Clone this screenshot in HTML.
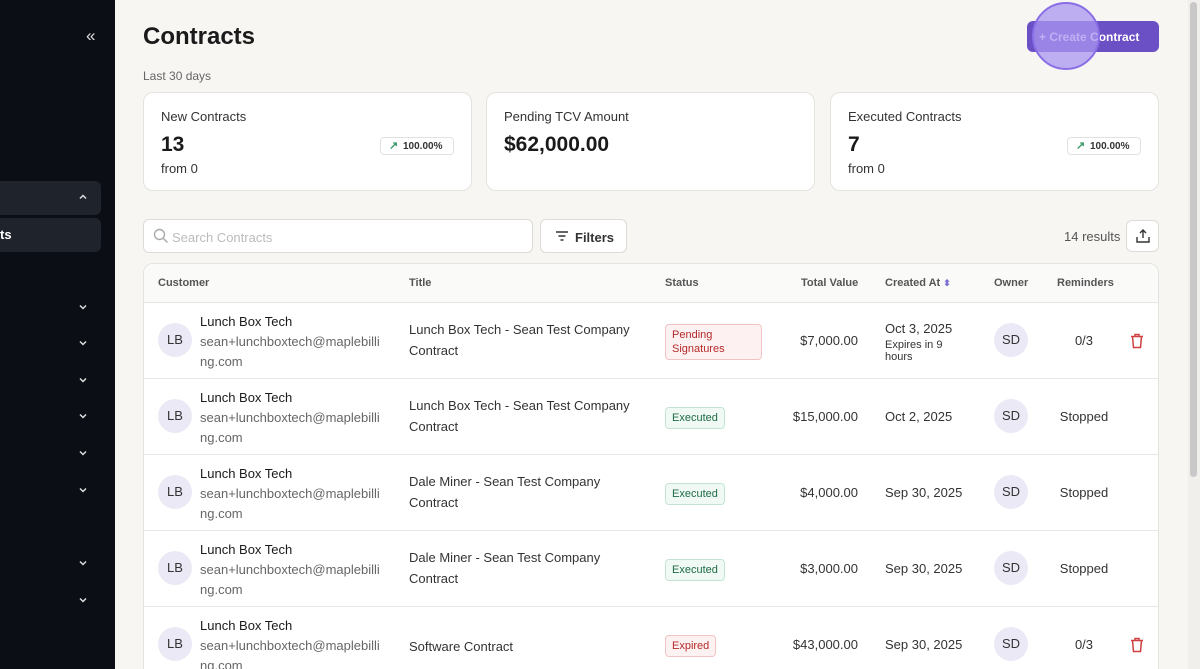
<!DOCTYPE html>
<html style="width:1200px;height:669px;overflow:hidden"><head><style>
*{box-sizing:border-box;margin:0;padding:0}
body{width:1200px;height:669px;overflow:hidden;background:#f7f6f3;font-family:"Liberation Sans",sans-serif;color:#1a1a1a;position:relative}
.sb{position:absolute;left:0;top:0;width:115px;height:669px;background:#0b0e15}
.sbi{position:absolute;left:0;width:101px;height:34px;background:#1f232c;border-radius:0 6px 6px 0}
.chev{position:absolute;left:78px;width:10px;height:10px}
.abs{position:absolute}
.card{position:absolute;top:92px;width:329px;height:99px;background:#fff;border:1px solid #e4e3df;border-radius:10px}
.card .l{position:absolute;left:17px;top:16px;font-size:13px;color:#333}
.card .v{position:absolute;left:17px;top:40px;font-size:21px;font-weight:bold}
.card .f{position:absolute;left:17px;top:68px;font-size:13px;color:#333}
.pill{position:absolute;right:17px;top:44px;width:74px;height:18px;border:1px solid #e2e2e2;border-radius:4px;font-size:10px;font-weight:bold;color:#333;padding:3px 0 0 22px}
.pill span{position:absolute;left:8px;top:1px;color:#3a9a6a;font-size:11px}
.tbl{position:absolute;left:143px;top:263px;width:1016px;height:420px;background:#fff;border:1px solid #e4e3df;border-radius:10px;overflow:hidden}
.th{position:absolute;top:0;left:0;right:0;height:39px;background:#fafaf9;border-bottom:1px solid #e7e6e2;font-size:11px;font-weight:bold;color:#555}
.th div{position:absolute;top:13px}
.row{position:absolute;left:0;right:0;height:76px;border-bottom:1px solid #e7e6e2;font-size:13px;color:#333}
.row>div{position:absolute}
.av{width:34px;height:34px;border-radius:50%;background:#ebe9f5;text-align:center;line-height:34px;font-size:13px;color:#333}
.badge{font-size:11px;border-radius:4px;padding:3px 6px;line-height:14px}
.ex{background:#f0f9f4;border:1px solid #c5e3d2;color:#1f6b45}
.rd{background:#fdf1f1;border:1px solid #f0c4c4;color:#b42a2a}
#clip{position:absolute;left:0;top:0;width:1188px;height:669px;overflow:hidden}
</style></head><body>
<div class="sb">
<div class="abs" style="left:86px;top:26px;color:#ddd;font-size:17px">«</div>
<div class="sbi" style="top:181px"></div>
<div class="sbi" style="top:218px"></div>
<div class="abs" style="left:0;top:227px;color:#fff;font-size:13px;font-weight:bold">ts</div>
<svg class="chev" style="top:192px" viewBox="0 0 10 10"><path d="M2 6.5L5 3.5L8 6.5" stroke="#ddd" stroke-width="1.5" fill="none"/></svg>
<svg class="chev" style="top:302px" viewBox="0 0 10 10"><path d="M2 3.5L5 6.5L8 3.5" stroke="#ddd" stroke-width="1.5" fill="none"/></svg>
<svg class="chev" style="top:338px" viewBox="0 0 10 10"><path d="M2 3.5L5 6.5L8 3.5" stroke="#ddd" stroke-width="1.5" fill="none"/></svg>
<svg class="chev" style="top:375px" viewBox="0 0 10 10"><path d="M2 3.5L5 6.5L8 3.5" stroke="#ddd" stroke-width="1.5" fill="none"/></svg>
<svg class="chev" style="top:411px" viewBox="0 0 10 10"><path d="M2 3.5L5 6.5L8 3.5" stroke="#ddd" stroke-width="1.5" fill="none"/></svg>
<svg class="chev" style="top:448px" viewBox="0 0 10 10"><path d="M2 3.5L5 6.5L8 3.5" stroke="#ddd" stroke-width="1.5" fill="none"/></svg>
<svg class="chev" style="top:485px" viewBox="0 0 10 10"><path d="M2 3.5L5 6.5L8 3.5" stroke="#ddd" stroke-width="1.5" fill="none"/></svg>
<svg class="chev" style="top:558px" viewBox="0 0 10 10"><path d="M2 3.5L5 6.5L8 3.5" stroke="#ddd" stroke-width="1.5" fill="none"/></svg>
<svg class="chev" style="top:595px" viewBox="0 0 10 10"><path d="M2 3.5L5 6.5L8 3.5" stroke="#ddd" stroke-width="1.5" fill="none"/></svg>
</div>
<div id="clip">
<div class="abs" style="left:143px;top:23px;font-size:24px;font-weight:bold">Contracts</div>
<div class="abs" style="left:143px;top:69px;font-size:12px;color:#666">Last 30 days</div>
<div class="abs" style="left:1027px;top:21px;width:132px;height:31px;background:#6b4fc4;border-radius:6px;color:#fff;font-size:12px;font-weight:bold;padding:9px 0 0 12px">+ Create Contract</div>
<div class="abs" style="left:1032px;top:2px;width:68px;height:68px;border-radius:50%;background:rgba(170,150,240,.75);border:2px solid #8a6ee6"></div>
<div class="card" style="left:143px"><div class="l">New Contracts</div><div class="v">13</div><div class="f">from 0</div><div class="pill"><span>↗</span>100.00%</div></div>
<div class="card" style="left:486px"><div class="l">Pending TCV Amount</div><div class="v">$62,000.00</div></div>
<div class="card" style="left:830px"><div class="l">Executed Contracts</div><div class="v">7</div><div class="f">from 0</div><div class="pill"><span>↗</span>100.00%</div></div>
<div class="abs" style="left:143px;top:219px;width:390px;height:34px;background:#fff;border:1px solid #dcdbd7;border-radius:6px;font-size:13px;color:#bbb;padding:10px 0 0 28px">Search Contracts
<svg class="abs" style="left:9px;top:8px" width="16" height="16" viewBox="0 0 16 16"><circle cx="6.5" cy="6.5" r="5" stroke="#aaa" stroke-width="1.4" fill="none"/><path d="M10.5 10.5L14.5 14.5" stroke="#aaa" stroke-width="1.4"/></svg></div>
<div class="abs" style="left:540px;top:219px;width:87px;height:34px;background:#fff;border:1px solid #dcdbd7;border-radius:6px;font-size:13px;font-weight:bold;color:#333;padding:10px 0 0 34px">Filters
<svg class="abs" style="left:14px;top:10px" width="14" height="12" viewBox="0 0 14 12"><path d="M1 2H13M3.5 6H10.5M5.5 10H8.5" stroke="#333" stroke-width="1.5"/></svg></div>
<div class="abs" style="left:1064px;top:229px;font-size:13px;color:#555">14 results</div>
<div class="abs" style="left:1126px;top:220px;width:33px;height:32px;background:#fff;border:1px solid #dcdbd7;border-radius:6px">
<svg class="abs" style="left:8px;top:7px" width="16" height="16" viewBox="0 0 16 16"><path d="M8 10V2M5 5L8 2L11 5M2 9V14H14V9" stroke="#333" stroke-width="1.4" fill="none"/></svg></div>
<div class="tbl">
<div class="th"><div style="left:14px">Customer</div><div style="left:265px">Title</div><div style="left:521px">Status</div><div style="left:657px">Total Value</div><div style="left:741px">Created At <span style="color:#7a6fd0;font-size:9px">⬍</span></div><div style="left:850px">Owner</div><div style="left:913px">Reminders</div></div>
</div>
<div id="rows"></div>
</div>
<div class="abs" style="left:1188px;top:0;width:12px;height:669px;background:#f0efec"></div>
<div class="abs" style="left:1190px;top:2px;width:7px;height:475px;background:#c8c8c8;border-radius:4px"></div>
<script>
var d=[["Lunch Box Tech - Sean Test Company<br>Contract","rd","Pending<br>Signatures","$7,000.00","Oct 3, 2025","0/3",1,1],
["Lunch Box Tech - Sean Test Company<br>Contract","ex","Executed","$15,000.00","Oct 2, 2025","Stopped",0,0],
["Dale Miner - Sean Test Company<br>Contract","ex","Executed","$4,000.00","Sep 30, 2025","Stopped",0,0],
["Dale Miner - Sean Test Company<br>Contract","ex","Executed","$3,000.00","Sep 30, 2025","Stopped",0,0],
["Software Contract","rd","Expired","$43,000.00","Sep 30, 2025","0/3",1,0]];
var h="";d.forEach(function(r,i){var t=303+i*76;
h+='<div class="row" style="position:absolute;left:144px;width:1014px;top:'+t+'px;background:#fff">'+
'<div class="av" style="left:14px;top:20px">LB</div>'+
'<div style="left:56px;top:9px;line-height:20px"><span style="color:#1a1a1a">Lunch Box Tech</span><br><span style="color:#666">sean+lunchboxtech@maplebilli<br>ng.com</span></div>'+
'<div style="left:265px;top:'+(r[0].indexOf("<br>")>0?16:29)+'px;line-height:21px">'+r[0]+'</div>'+
'<div class="badge '+r[1]+'" style="left:521px;top:'+(r[2].indexOf("<br>")>0?21:28)+'px;'+(r[2].indexOf("<br>")>0?'width:97px':'')+'">'+r[2]+'</div>'+
'<div style="right:300px;top:30px">'+r[3]+'</div>'+
'<div style="left:741px;top:'+(r[7]?18:30)+'px">'+r[4]+(r[7]?'<div style="font-size:11px;line-height:12px;margin-top:3px">Expires in 9<br>hours</div>':'')+'</div>'+
'<div class="av" style="left:850px;top:20px">SD</div>'+
'<div style="left:900px;width:80px;text-align:center;top:30px">'+r[5]+'</div>'+
(r[6]?'<svg style="position:absolute;left:986px;top:30px" width="14" height="16" viewBox="0 0 14 16"><path d="M1 3.5H13M5 3.5V1.5H9V3.5M2.5 3.5L3.5 14.5H10.5L11.5 3.5" stroke="#d04040" stroke-width="1.5" fill="none"/></svg>':'')+
'</div>';});
document.getElementById("rows").innerHTML=h;
</script>
</body></html>
